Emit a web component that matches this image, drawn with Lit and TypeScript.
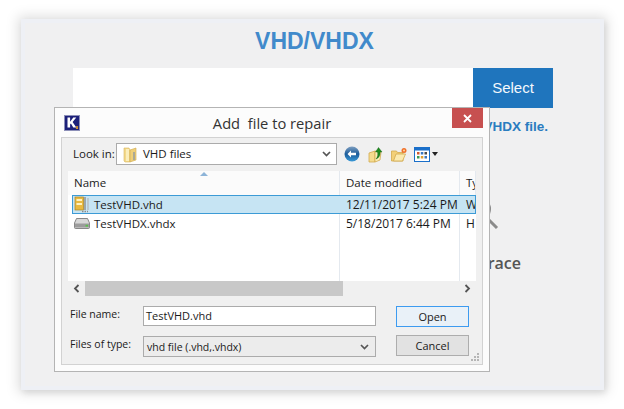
import { LitElement, html, css } from "lit";
import { customElement } from "lit/decorators.js";

const folder = html`<svg class="fold" width="14" height="17" viewBox="0 0 14 17"><path d="M1 2h5l1 2v12H2l-1-1z" fill="#f3d98a" stroke="#d9b55f" stroke-width=".6"/><path d="M7 4l6-2v12l-6 2z" fill="#efcf78" stroke="#cfa94e" stroke-width=".6"/><path d="M3 3h3v12H3z" fill="#fbeebb"/><path d="M10 6h2v8h-2z" fill="#7e8fa8" opacity=".6"/></svg>`;

const kLogo = html`<svg width="16" height="16" viewBox="0 0 16 16"><rect x=".5" y=".5" width="15" height="15" fill="#1c2079" stroke="#8d90b8"/><path d="M3.500 2.500h2.600v4.200l3.200-4.200h3l-3.700 4.500 3.700 5.500H9.300L6.900 8.600 6.100 9.600v2.900H3.500z" fill="#fff"/><path d="M12 11.500l2 2M14 11.500l-2 2" stroke="#e09a2c" stroke-width="1.100"/></svg>`;

const backIcon = html`<svg width="16" height="16" viewBox="0 0 16 16"><defs><linearGradient id="bk" x1="0" y1="0" x2="0" y2="1"><stop offset="0" stop-color="#7f9fc0"/><stop offset=".5" stop-color="#1c5c9a"/><stop offset="1" stop-color="#3a9ad8"/></linearGradient></defs><circle cx="8" cy="8" r="7.500" fill="url(#bk)"/><path d="M3.500 8l3.500-3.500v2.300h5v2.400h-5v2.300z" fill="#fff"/></svg>`;

const upIcon = html`<svg width="16" height="17" viewBox="0 0 16 17"><path d="M1 7l6-2v11l-6 0z" fill="#f5dc8f" stroke="#d2a94e" stroke-width=".8"/><path d="M7 5l6 1-1 8-5 2z" fill="#fbeeb8" stroke="#d2a94e" stroke-width=".8"/><path d="M8 13c2-2 2-5 1.500-7H7.500L10.500 1.500 14 6h-2c.5 3-1 6-4 7z" fill="#1f8a1f" stroke="#0f5f0f" stroke-width=".4"/></svg>`;

const newFolder = html`<svg width="16" height="15" viewBox="0 0 16 15"><path d="M.5 4h5l1 1.500H12V14H.5z" fill="#f3d078" stroke="#d2a94e" stroke-width=".8"/><path d="M2.500 14L5 7h9.500L11.500 14z" fill="#fbeab0" stroke="#d2a94e" stroke-width=".8"/><circle cx="13" cy="3.500" r="2.500" fill="#f0702a"/><circle cx="13" cy="3.500" r="1" fill="#ffd9a0"/></svg>`;

const viewIcon = html`<svg width="16" height="15" viewBox="0 0 16 15"><rect x=".5" y=".5" width="15" height="14" fill="#fff" stroke="#1a6fc9"/><rect x="1" y="1" width="14" height="2.500" fill="#1a6fc9"/><rect x="3" y="5" width="2.500" height="2.500" fill="#d05a30"/><rect x="6.800" y="5" width="2.500" height="2.500" fill="#3a78c0"/><rect x="10.500" y="5" width="2.500" height="2.500" fill="#4a4a4a"/><rect x="3" y="9" width="2.500" height="2.500" fill="#3a9a50"/><rect x="6.800" y="9" width="2.500" height="2.500" fill="#e0a030"/><rect x="10.500" y="9" width="2.500" height="2.500" fill="#3a78c0"/></svg>`;

const vhdIcon = html`<svg width="16" height="17" viewBox="0 0 16 17"><rect x="1" y="1" width="8.500" height="13" fill="#e9b93f" stroke="#a98326" stroke-width=".7"/><rect x="2.500" y="3" width="5.500" height="2" fill="#fff2c0"/><rect x="2.500" y="7" width="5.500" height="2" fill="#fff2c0"/><path d="M11 1v13" stroke="#8c8c8c" stroke-width="1.400"/><path d="M14 2v12" stroke="#b5b5b5" stroke-width="1.200"/><path d="M8 15.500h6" stroke="#8a8a8a" stroke-width="1.400" stroke-dasharray="1.500 1"/></svg>`;

const diskIcon = html`<svg width="16" height="12" viewBox="0 0 16 12"><path d="M2.500 1.500h11L15.500 6v4.500a1 1 0 0 1-1 1h-13a1 1 0 0 1-1-1V6z" fill="#d8d8d8" stroke="#6f6f6f" stroke-width=".8"/><path d="M1 6.500h14v4H1z" fill="#9c9c9c"/><rect x="11.500" y="7.800" width="2.500" height="1.800" fill="#58c24a"/></svg>`;

const chevron = html`<svg class="chev" width="9" height="6" viewBox="0 0 9 6"><path d="M1 1l3.500 3.500L8 1" fill="none" stroke="#555" stroke-width="1.700"/></svg>`;

@customElement("app-root")
export class AppRoot extends LitElement {
  static styles = css`
    :host { display: block; width: 624px; height: 409px; background: #fff; position: relative; overflow: hidden; font-family: "Open Sans", "Liberation Sans", sans-serif; }
    * { box-sizing: border-box; }
    .stage { padding: 19px 20px 19px 21px; height: 409px; }
    .panel { height: 371px; background: #f0f0f1; border: 4px solid #eef0f5; box-shadow: 0 0 12px 3px rgba(0,0,0,.13), 2px 3px 6px rgba(0,0,0,.08); padding: 2px 47px 0 48px; display: flex; flex-direction: column; }
    h1 { margin: 0; padding-left: 3px; font: bold 23px/32px "Liberation Sans", sans-serif; color: #418acb; text-align: center; height: 43px; }
    .pick { display: flex; height: 40px; flex: none; }
    .pick .field { flex: 1; background: #fff; }
    .pick .btn { width: 80px; background: #1f75bd; color: #f4f8fc; font: 15px/40px "Liberation Sans", sans-serif; text-align: center; }
    .note { font: bold 13.500px/16px "Liberation Sans", sans-serif; color: #2a7cc0; text-align: right; margin: 11px 5px 0 0; }
    .lens { align-self: flex-end; margin: 63px 52px 0 0; display: block; }
    .trace { font: 600 16px/22px "Open Sans", sans-serif; color: #555; text-align: right; margin: 18px 32px 0 0; }

    .dialog { position: absolute; left: 54px; top: 107px; width: 436px; height: 265px; background: #fcfcfc; border: 1px solid #b4b4b4; padding: 0 6px 6px; display: flex; flex-direction: column; color: #1a1a1a; font-size: 11.500px; }
    .tbar { height: 29px; flex: none; display: flex; align-items: center; position: relative; padding-left: 3px; margin-top: 0; }
    .tbar .ttl { position: absolute; left: 0; right: 0; text-align: center; font-size: 14.700px; top: 4px; color: #333; line-height: 22px; white-space: pre; }
    .close { position: absolute; right: 0; top: 0; width: 31px; height: 20px; background: #c75050; display: flex; align-items: center; justify-content: center; }
    .inner { flex: 1; background: #f0f0f0; border: 1px solid #d2d2d2; padding: 5px 6px 0; display: flex; flex-direction: column; position: relative; }
    .look { display: flex; align-items: center; height: 22px; flex: none; }
    .look .lbl { width: 48px; padding-left: 5px; margin-top: -2px; }
    .combo { width: 221px; height: 22px; background: #fff; border: 1px solid #ababab; display: flex; align-items: center; padding: 0 5px 0 6px; gap: 6px; }
    .combo span { flex: 1; margin-top: -2px; }
    .tools { display: flex; align-items: center; margin-left: 7px; }
    .tools svg { display: block; flex: none; }
    .tools .b { margin-right: 8px; }
    .tools .b.n { margin-right: 7px; }
    .caret { width: 0; height: 0; border: 3.500px solid transparent; border-top: 4px solid #222; margin: 3px 0 0 2px; }
    .list { margin-top: 6px; height: 110px; flex: none; background: #fff; overflow: hidden; }
    .grid { display: grid; grid-template-columns: 272px 120px 16px; }
    .hd { height: 24px; background: #fbfbfb; line-height: 23px; position: relative; }
    .hd > div { padding-left: 6px; border-right: 1px solid #e4e9ef; white-space: nowrap; overflow: hidden; font-size: 11.500px; }
    .hd > div:last-child { border: 0; }
    .sort { position: absolute; left: 132px; top: 1px; width: 0; height: 0; border: 4px solid transparent; border-top: 0; border-bottom: 4px solid #8db4d8; }
    .row { position: relative; height: 19px; align-items: center; line-height: 17px; margin-left: 4px; grid-template-columns: 268px 120px 16px; }
    .row > div { white-space: nowrap; overflow: hidden; padding-left: 6px; font-size: 12px; }
    .row .nm { display: flex; align-items: center; gap: 4px; padding-left: 2px; font-size: 11.500px; }
    .row.sel { background: #c6e4f3; outline: 1px solid #3c9bd6; outline-offset: -1px; height: 19px; margin-right: 0; }
    .row.plain { height: 20px; margin-top: -1px; }
    .rows { position: relative; height: 86px; }
    .rows .lines { position: absolute; inset: 0; display: grid; grid-template-columns: 272px 120px 16px; pointer-events: none; }
    .rows .lines i { border-right: 1px solid #e4e9ef; }
    .rows .lines i:last-child { border: 0; }
    .rows .rowsin { position: relative; }
    .scroll { height: 15px; flex: none; display: flex; align-items: center; background: #f0f0f0; }
    .scroll .arr { width: 17px; height: 15px; display: flex; align-items: center; justify-content: center; flex: none; }
    .scroll .thumb { width: 258px; height: 15px; background: #c8c8c8; }
    .scroll .track { flex: 1; }
    .form { display: grid; grid-template-columns: 75px 233px 20px 73px; margin-top: 10px; grid-template-rows: 20px 21px; row-gap: 10px; font-size: 11px; }
    .form .l { line-height: 17px; font-size: 10.500px; padding-left: 2px; }
    .input { background: #fff; border: 1px solid #ababab; padding-left: 2px; line-height: 18px; font-size: 11px; }
    .select { background: #ececec; border: 1px solid #ababab; padding: 0 6px 0 3px; line-height: 20px; font-size: 10.500px; display: flex; align-items: center; justify-content: space-between; }
    .dbtn { background: #e2e2e2; border: 1px solid #adadad; text-align: center; line-height: 20px; height: 21px; margin-top: -1px; }
    .dbtn.on { background: #e9f1f8; border-color: #3d9bf0; height: 21px; margin-top: 0; line-height: 19px; }
    .spacer { grid-column: 3; }
    .grip { position: absolute; right: 2px; bottom: 2px; display: block; }
  `;

  render() {
    return html`
      <div class="stage">
        <div class="panel">
          <h1>VHD/VHDX</h1>
          <div class="pick"><div class="field"></div><div class="btn">Select</div></div>
          <div class="note">VHDX file.</div>
          <svg class="lens" width="26" height="36" viewBox="0 0 26 36"><circle cx="4" cy="11" r="11" fill="none" stroke="#8a8a8a" stroke-width="2"/><path d="M13 21l9 9" stroke="#8a8a8a" stroke-width="3"/></svg>
          <div class="trace">race</div>
        </div>
      </div>

      <div class="dialog">
        <div class="tbar">
          ${kLogo}
          <div class="ttl">Add  file to repair</div>
          <div class="close"><svg width="9" height="9" viewBox="0 0 9 9"><path d="M1 1l7 7M8 1l-7 7" stroke="#fff" stroke-width="1.800"/></svg></div>
        </div>
        <div class="inner">
          <div class="look">
            <div class="lbl">Look in:</div>
            <div class="combo">${folder}<span>VHD files</span>${chevron}</div>
            <div class="tools">
              <span class="b">${backIcon}</span><span class="b n">${upIcon}</span><span class="b n">${newFolder}</span>${viewIcon}<span class="caret"></span>
            </div>
          </div>
          <div class="list">
            <div class="grid hd">
              <div>Name</div><div>Date modified</div><div>Ty</div>
              <span class="sort"></span>
            </div>
            <div class="rows">
              <div class="lines"><i></i><i></i><i></i></div>
              <div class="rowsin">
                <div class="grid row sel"><div class="nm">${vhdIcon}TestVHD.vhd</div><div>12/11/2017 5:24 PM</div><div>W</div></div>
                <div class="grid row plain"><div class="nm">${diskIcon}TestVHDX.vhdx</div><div>5/18/2017 6:44 PM</div><div>H</div></div>
              </div>
            </div>
          </div>
          <div class="scroll">
            <div class="arr"><svg width="7" height="9" viewBox="0 0 7 9"><path d="M5.500 1L2 4.500 5.500 8" fill="none" stroke="#555" stroke-width="1.800"/></svg></div>
            <div class="thumb"></div>
            <div class="track"></div>
            <div class="arr"><svg width="7" height="9" viewBox="0 0 7 9"><path d="M1.500 1L5 4.500 1.500 8" fill="none" stroke="#555" stroke-width="1.800"/></svg></div>
          </div>
          <div class="form">
            <div class="l">File name:</div>
            <div class="input">TestVHD.vhd</div>
            <div class="spacer"></div>
            <div class="dbtn on">Open</div>
            <div class="l">Files of type:</div>
            <div class="select"><span>vhd file (.vhd,.vhdx)</span>${chevron}</div>
            <div class="spacer"></div>
            <div class="dbtn">Cancel</div>
          </div>
          <svg class="grip" width="9" height="9" viewBox="0 0 9 9" fill="#b5b5b5"><rect x="6" y="0" width="2" height="2"/><rect x="3" y="3" width="2" height="2"/><rect x="6" y="3" width="2" height="2"/><rect x="0" y="6" width="2" height="2"/><rect x="3" y="6" width="2" height="2"/><rect x="6" y="6" width="2" height="2"/></svg>
        </div>
      </div>
    `;
  }
}
